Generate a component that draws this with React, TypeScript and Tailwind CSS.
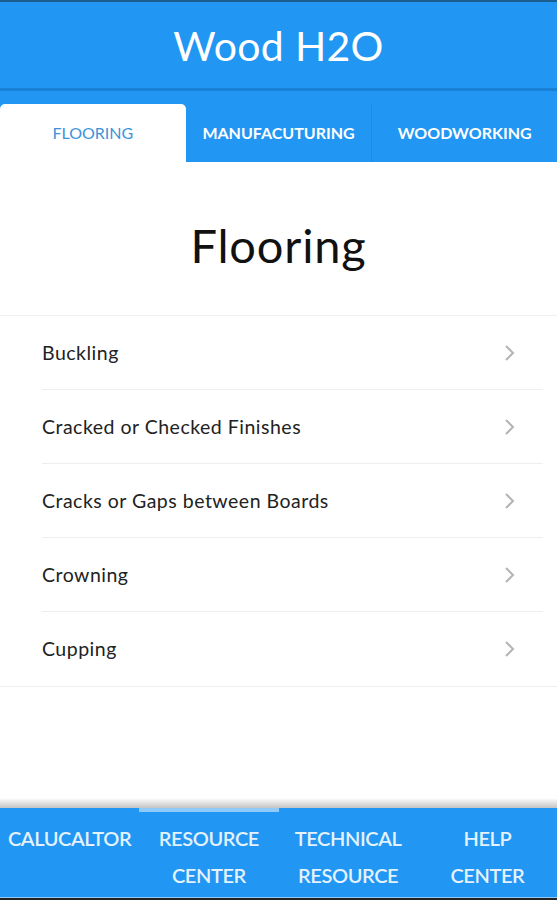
import React from 'react';

const tabs = ['FLOORING', 'MANUFACUTURING', 'WOODWORKING'];
const items = [
  'Buckling',
  'Cracked or Checked Finishes',
  'Cracks or Gaps between Boards',
  'Crowning',
  'Cupping',
];
const navs = [
  ['CALUCALTOR'],
  ['RESOURCE', 'CENTER'],
  ['TECHNICAL', 'RESOURCE'],
  ['HELP', 'CENTER'],
];

function Chevron() {
  return (
    <svg width="14" height="18" viewBox="0 0 14 18" className="text-[#b4b4b4]">
      <polyline points="3,2 10,9 3,16" fill="none" stroke="currentColor" strokeWidth="2" />
    </svg>
  );
}

export default function App() {
  return (
    <div
      className="h-[900px] w-full flex flex-col bg-white overflow-hidden"
      style={{ fontFamily: 'Lato, "Open Sans", sans-serif' }}
    >
      <div className="h-[2px] bg-[#1d5e90]" />
      <header className="h-[86px] bg-[#2196f3] flex items-center justify-center">
        <h1 className="text-white text-[41px] leading-none tracking-[0.3px]">Wood H2O</h1>
      </header>
      <div className="h-[3px] bg-[#1a82d6]" />
      <div className="h-[13px] bg-[#2196f3]" />

      <nav className="h-[58px] bg-[#2196f3] grid grid-cols-3">
        {tabs.map((t, i) => (
          <div
            key={t}
            className={
              i === 0
                ? 'bg-white rounded-t-[5px] flex items-center justify-center text-[#3b94d9] text-[16px]'
                : 'flex items-center justify-center text-white font-bold text-[16px] ' +
                  (i === 2 ? 'border-l border-[#1f8ae0]' : '')
            }
          >
            {t}
          </div>
        ))}
      </nav>

      <section className="h-[154px] flex items-center justify-center border-b border-[#f0f0f0]">
        <h2 className="text-[47px] text-[#111] leading-none pt-[14px] tracking-[0.8px]">Flooring</h2>
      </section>

      <ul className="border-b border-[#eeeeee]">
        {items.map((item, i) => (
          <li key={item} className="pl-[42px] pr-[14px]">
            <div
              className={
                'h-[74px] flex items-center justify-between pr-[26px] ' +
                (i < items.length - 1 ? 'border-b border-[#eeeeee]' : '')
              }
            >
              <span className="text-[19.5px] text-[#222] tracking-[0.5px]">{item}</span>
              <Chevron />
            </div>
          </li>
        ))}
      </ul>

      <div className="flex-1" />

      <div className="h-[10px] bg-gradient-to-b from-white to-[#c4c4c4]" />
      <footer className="h-[89px] bg-[#2196f3] grid grid-cols-4">
        {navs.map((lines, i) => (
          <div
            key={i}
            className={
              'flex flex-col items-center pt-[8px] border-t-[4px] text-[#e3f2fd] font-semibold text-[20px] leading-[37px] tracking-[-0.4px] ' +
              (i === 1 ? 'border-[#90caf9]' : 'border-transparent')
            }
          >
            {lines.map((l) => (
              <span key={l}>{l}</span>
            ))}
          </div>
        ))}
      </footer>
      <div className="h-[1px] bg-[#90caf9]" />
      <div className="h-[2px] bg-[#222]" />
    </div>
  );
}
